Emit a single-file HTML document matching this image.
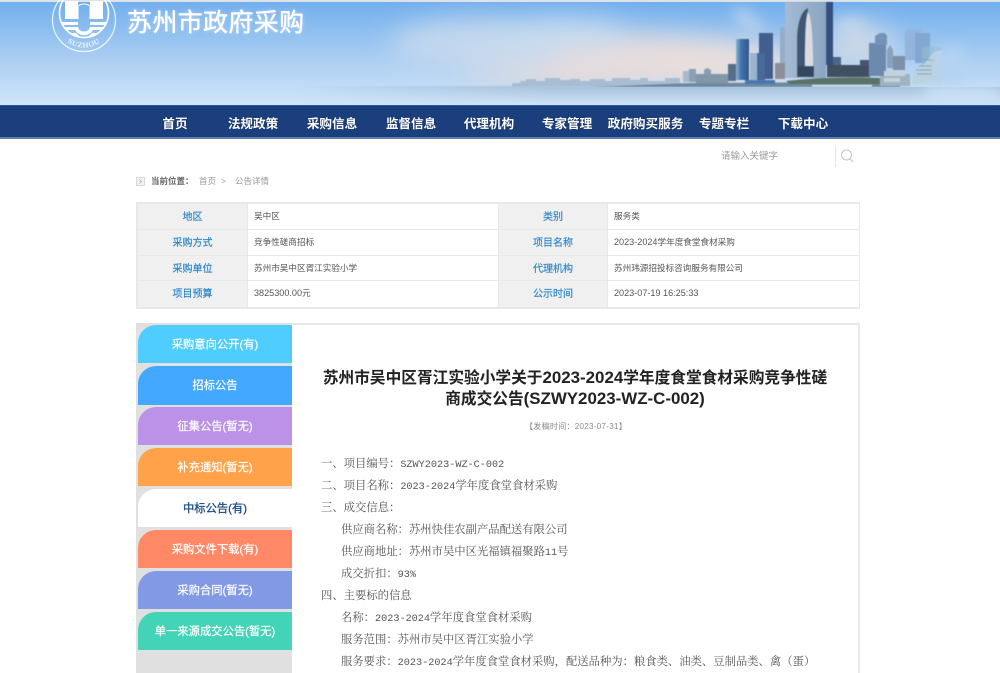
<!DOCTYPE html>
<html lang="zh-CN"><head><meta charset="utf-8"><title>苏州市政府采购</title>
<style>
html,body{margin:0;padding:0;background:#fff;overflow:hidden;width:1000px;height:673px}
#w{position:absolute;left:0;top:0;width:1000px;height:673px;overflow:hidden;font-family:"Liberation Sans","WenQuanYi Zen Hei","Noto Sans CJK SC",sans-serif}
.a{position:absolute;white-space:nowrap}
.nav{top:107px;height:32px;line-height:35px;font-size:12.6px;font-weight:bold;color:#fff;text-shadow:0 0 1px #0b1f4d;transform:translateX(-50%)}
.l{color:#2f88c9;font-size:10px;text-align:center;line-height:27px;font-weight:normal;-webkit-text-stroke:.2px #2f88c9;background:#f0f0f0}
.v{color:#555;font-size:8.6px;line-height:25px;background:#fff;padding-left:6px;box-sizing:border-box}
.v b{font-weight:normal;font-size:9.1px}
.tab{left:138px;width:154px;height:38px;line-height:40px;border-radius:18px 0 0 0;color:#fff;text-align:center;font-size:11.3px;-webkit-text-stroke:.2px #fff}
.c{color:#555;font-size:11.33px;font-family:"Liberation Mono","Noto Serif CJK SC",serif;line-height:22px;letter-spacing:0}
.c b{font-weight:normal;font-size:10.2px}
.t b{font-size:16.9px}
</style></head><body><div id="w">

<svg class="a" style="left:0;top:0" width="1000" height="105" viewBox="0 0 1000 105">
<defs>
<linearGradient id="sky" x1="0" y1="0" x2="0" y2="1"><stop offset="0" stop-color="#70aeed"/><stop offset=".55" stop-color="#a9cdf2"/><stop offset="1" stop-color="#d0e5fa"/></linearGradient>
<linearGradient id="wat" x1="0" y1="0" x2="0" y2="1"><stop offset="0" stop-color="#a7c3dd"/><stop offset="1" stop-color="#d0e4f8"/></linearGradient>
<linearGradient id="far" x1="300" y1="0" x2="520" y2="0" gradientUnits="userSpaceOnUse"><stop offset="0" stop-color="#a7bdd3" stop-opacity="0"/><stop offset="1" stop-color="#a7bdd3"/></linearGradient>
<linearGradient id="mg" x1="300" y1="0" x2="540" y2="0" gradientUnits="userSpaceOnUse"><stop offset="0" stop-color="#000"/><stop offset="1" stop-color="#fff"/></linearGradient>
<mask id="wm" maskUnits="userSpaceOnUse" x="0" y="80" width="1000" height="30"><rect x="0" y="80" width="1000" height="30" fill="url(#mg)"/></mask>
<filter id="b20" x="-50%" y="-50%" width="200%" height="200%"><feGaussianBlur stdDeviation="13"/></filter>
<filter id="b8" x="-50%" y="-50%" width="200%" height="200%"><feGaussianBlur stdDeviation="7"/></filter>
<filter id="b1"><feGaussianBlur stdDeviation=".45"/></filter>
<linearGradient id="gt" x1="0" y1="0" x2="1" y2="0"><stop offset="0" stop-color="#a4bbd3"/><stop offset="1" stop-color="#8aa5c2"/></linearGradient>
<linearGradient id="bl" x1="0" y1="0" x2="1" y2="0"><stop offset="0" stop-color="#8fb0d0"/><stop offset=".4" stop-color="#3f72ad"/><stop offset="1" stop-color="#33588a"/></linearGradient>
</defs>
<rect width="1000" height="105" fill="url(#sky)"/>
<rect width="1000" height="2" fill="#dfe3e8"/>
<g filter="url(#b20)">
<ellipse cx="620" cy="62" rx="170" ry="28" fill="#e6dcdc"/>
<ellipse cx="730" cy="65" rx="70" ry="22" fill="#eadfdc"/>
<ellipse cx="480" cy="45" rx="90" ry="25" fill="#c4d8ee"/>
<ellipse cx="560" cy="35" rx="70" ry="16" fill="#c9dbee"/>
<ellipse cx="860" cy="45" rx="35" ry="20" fill="#cfd9e6"/>
</g>
<g filter="url(#b8)" fill="#dde3ec" opacity=".7">
<ellipse cx="742" cy="14" rx="10" ry="5"/><ellipse cx="752" cy="25" rx="12" ry="5"/><ellipse cx="850" cy="25" rx="16" ry="6"/>
</g>
<g filter="url(#b1)">
<!-- far shore -->
<path d="M300 86H512V83H520V81H526V79H536V81H545V78H560V80H570V79H580V81H590V79H605V81H612V78H630V80H640V78H648V81H665V78H680V87H300Z" fill="url(#far)"/>
<path d="M590 87L640 85L690 83L900 82V87H590Z" fill="#6d8aa0"/>
<!-- left low buildings -->
<rect x="683" y="71" width="6" height="11" fill="#a9b9c9"/><rect x="689" y="69" width="7" height="13" fill="#8ca0b5"/>
<path d="M704 82V70L707 68L711 70V82Z" fill="#8a9eb3"/>
<rect x="696" y="74" width="32" height="9" fill="#8297aa"/>
<rect x="728" y="64" width="8" height="17" fill="#566e89"/>
<rect x="736" y="39" width="13" height="41" fill="url(#bl)"/>
<rect x="759" y="33" width="14" height="46" fill="#3f5e8e"/>
<rect x="750" y="53" width="13" height="27" fill="#9ab4d0"/><rect x="757" y="53" width="8" height="27" fill="#49699a"/>
<rect x="780" y="27" width="5" height="40" fill="#94aec9"/>
<rect x="775" y="63" width="10" height="16" fill="#8a8f98"/>
<rect x="745" y="80" width="30" height="4" fill="#4a78b0"/>
<!-- gate of orient -->
<rect x="785" y="2" width="41" height="76" fill="url(#gt)"/>
<path d="M805 66C805 30 806 16 808 12C811 16 813 35 813 66Z" fill="#dcdbe2"/>
<path d="M797 66V40C797 22 802 10 808 8V12C806 16 805 30 805 66Z" fill="#3f5675"/>
<rect x="826" y="2" width="7" height="63" fill="#34507f"/>
<rect x="797" y="66" width="17" height="11" fill="#344660"/>
<rect x="833" y="57" width="8" height="10" fill="#4d6887"/>
<rect x="827" y="65" width="43" height="12" fill="#3f4f62"/>
<rect x="860" y="60" width="9" height="6" fill="#42566f"/>
<!-- right towers -->
<rect x="869" y="43" width="17" height="33" fill="#6c8aae"/>
<path d="M875 45V36L880 33H885L887 36V45Z" fill="#7393b8"/>
<path d="M887 68V50L890 45L893 50V68Z" fill="#8ba0b9"/>
<rect x="893" y="56" width="12" height="14" fill="#7c90a8"/>
<path d="M905 68V31L910 29H921V33H930V60H905Z" fill="#93b4db"/><rect x="915" y="33" width="15" height="30" fill="#83a7d3"/>
<rect x="922" y="47" width="20" height="22" fill="#8fbcd0" opacity=".7"/>
<path d="M786 81Q830 76 880 78L885 84H790Z" fill="#5a7365"/>
<path d="M880 76L910 74V86H880Z" fill="#9fb3c0"/>
<path d="M884 71H905V76H884ZM884 78H900V82H884Z" fill="#c4d2dd"/>
<path d="M912 84L914 72L924 64L934 52L942 50V86Z" fill="#bcd2e0"/>
<path d="M916 70H932M917 74H932M919 66H932M922 60H934" stroke="#7fa0b8" stroke-width="1"/>
<rect x="812" y="85" width="60" height="1.5" fill="#dde5ee"/>
</g>
<rect x="0" y="87" width="1000" height="18" fill="url(#wat)" mask="url(#wm)"/>
<rect x="938" y="48" width="26" height="42" fill="#b4d3f3" filter="url(#b8)"/>
<rect x="925" y="88" width="75" height="17" fill="#cbe1f8" filter="url(#b8)"/>
<!-- logo -->
<g fill="none" stroke="#fff">
<circle cx="84" cy="20" r="31.5" stroke-width="1.2" opacity=".85"/>
<circle cx="84" cy="13" r="24.5" stroke-width="1.6"/>
</g>
<path d="M65 1H78V19H65ZM90 1H103V19H90Z" fill="#fff"/>
<path d="M62 22H78V25H63ZM90 22H106L105 25H90ZM65 27H78C79 33 89 33 90 27H103L101 30H93C89 37 79 37 75 30H67ZM71 33H76L79 36H74ZM92 33H97L94 36H89Z" fill="#fff"/>
<path d="M78 19V6Q84 2 90 6V19" fill="none" stroke="#fff" stroke-width="1"/>
<path id="arc" d="M58 30A28 28 0 0 0 110 30" fill="none"/>
<text font-family="Liberation Serif,serif" font-size="7.5" font-weight="bold" fill="#eef6fd" letter-spacing=".6" text-anchor="middle"><textPath href="#arc" startOffset="50%">SUZHOU</textPath></text>
</svg>

<div class="a" style="left:127px;top:6px;font-size:25px;line-height:34px;letter-spacing:.35px;color:#fff;font-weight:normal;-webkit-text-stroke:.4px #fff;text-shadow:0 0 4px rgba(255,255,255,.5)">苏州市政府采购</div>

<div class="a" style="left:0;top:105px;width:1000px;height:34px;background:#1b3f7c;border-top:1px solid #2c5aa0;box-sizing:border-box"></div>
<div class="a" style="left:0;top:137px;width:1000px;height:2px;background:#5a7fb0"></div>
<div class="a nav" style="left:175px">首页</div>
<div class="a nav" style="left:253px">法规政策</div>
<div class="a nav" style="left:332px">采购信息</div>
<div class="a nav" style="left:411px">监督信息</div>
<div class="a nav" style="left:489px">代理机构</div>
<div class="a nav" style="left:567px">专家管理</div>
<div class="a nav" style="left:645.5px">政府购买服务</div>
<div class="a nav" style="left:724px">专题专栏</div>
<div class="a nav" style="left:803px">下载中心</div>

<div class="a" style="left:721px;top:150px;font-size:9.5px;line-height:13px;color:#999">请输入关键字</div>
<div class="a" style="left:835px;top:146px;width:1px;height:21px;background:#e3e3e3"></div>
<svg class="a" style="left:839px;top:148px" width="16" height="16" viewBox="0 0 16 16"><circle cx="7.5" cy="7" r="5" fill="none" stroke="#c4c4c4" stroke-width="1"/><path d="M11 10.5L14 14" stroke="#c4c4c4" stroke-width="1"/></svg>

<svg class="a" style="left:136px;top:177px" width="9" height="9" viewBox="0 0 9 9"><rect x=".5" y=".5" width="8" height="8" fill="#f2f2f2" stroke="#d8d8d8"/><path d="M3.5 2.5L5.5 4.5L3.5 6.5" fill="none" stroke="#aaa" stroke-width=".8"/></svg>
<div class="a" style="left:151px;top:175px;font-size:8.5px;line-height:12px;font-weight:bold;color:#666">当前位置：</div>
<div class="a" style="left:199px;top:175px;font-size:8.5px;line-height:12px;color:#999">首页</div>
<div class="a" style="left:221px;top:175px;font-size:8.5px;line-height:12px;color:#999">&gt;</div>
<div class="a" style="left:235px;top:175px;font-size:8.5px;line-height:12px;color:#999">公告详情</div>

<!-- info table -->
<div class="a" style="left:136px;top:202px;width:724px;height:107px;background:#e8e8e8"></div>
<div class="a l" style="left:138px;top:204px;width:109px;height:25px">地区</div>
<div class="a v" style="left:248px;top:204px;width:250px;height:25px">吴中区</div>
<div class="a l" style="left:499px;top:204px;width:108px;height:25px">类别</div>
<div class="a v" style="left:608px;top:204px;width:251px;height:25px">服务类</div>
<div class="a l" style="left:138px;top:230px;width:109px;height:25px">采购方式</div>
<div class="a v" style="left:248px;top:230px;width:250px;height:25px">竞争性磋商招标</div>
<div class="a l" style="left:499px;top:230px;width:108px;height:25px">项目名称</div>
<div class="a v" style="left:608px;top:230px;width:251px;height:25px"><b>2023-2024</b>学年度食堂食材采购</div>
<div class="a l" style="left:138px;top:256px;width:109px;height:24px">采购单位</div>
<div class="a v" style="left:248px;top:256px;width:250px;height:24px">苏州市吴中区胥江实验小学</div>
<div class="a l" style="left:499px;top:256px;width:108px;height:24px">代理机构</div>
<div class="a v" style="left:608px;top:256px;width:251px;height:24px">苏州玮源招投标咨询服务有限公司</div>
<div class="a l" style="left:138px;top:281px;width:109px;height:26px">项目预算</div>
<div class="a v" style="left:248px;top:281px;width:250px;height:26px"><b>3825300.00</b>元</div>
<div class="a l" style="left:499px;top:281px;width:108px;height:26px">公示时间</div>
<div class="a v" style="left:608px;top:281px;width:251px;height:26px"><b>2023-07-19 16:25:33</b></div>

<!-- main box -->
<div class="a" style="left:136px;top:323px;width:724px;height:360px;border:2px solid #e8e8e8;box-sizing:border-box;background:#fff"></div>
<div class="a" style="left:136px;top:323px;width:156px;height:350px;background:#e0e0e0"></div>
<div class="a tab" style="top:325px;background:#4fcdff">采购意向公开(有)</div>
<div class="a tab" style="top:366px;background:#43a8ff;height:39px">招标公告</div>
<div class="a tab" style="top:407px;background:#bb92e8">征集公告(暂无)</div>
<div class="a tab" style="top:448px;background:#ffa24a">补充通知(暂无)</div>
<div class="a tab" style="top:489px;background:#fff;color:#1c4a86;-webkit-text-stroke:.3px #1c4a86">中标公告(有)</div>
<div class="a tab" style="top:530px;background:#ff8866">采购文件下载(有)</div>
<div class="a tab" style="top:571px;background:#829ae6">采购合同(暂无)</div>
<div class="a tab" style="top:612px;background:#43d3b7">单一来源成交公告(暂无)</div>

<div class="a t" style="left:300px;width:550px;top:368px;text-align:center;font-size:15.7px;line-height:19.5px;font-weight:bold;color:#222">苏州市吴中区胥江实验小学关于<b>2023-2024</b>学年度食堂食材采购竞争性磋<br>商成交公告<b>(SZWY2023-WZ-C-002)</b></div>
<div class="a" style="left:525px;top:421px;font-size:8px;line-height:11px;letter-spacing:.3px;color:#888">【发稿时间：2023-07-31】</div>

<div class="a c" style="left:321px;top:454px">一、项目编号：<b>SZWY2023-WZ-C-002</b></div>
<div class="a c" style="left:321px;top:476px">二、项目名称：<b>2023-2024</b>学年度食堂食材采购</div>
<div class="a c" style="left:321px;top:498px">三、成交信息：</div>
<div class="a c" style="left:341px;top:520px">供应商名称：苏州快佳农副产品配送有限公司</div>
<div class="a c" style="left:341px;top:542px">供应商地址：苏州市吴中区光福镇福聚路<b>11</b>号</div>
<div class="a c" style="left:341px;top:564px">成交折扣：<b>93%</b></div>
<div class="a c" style="left:321px;top:586px">四、主要标的信息</div>
<div class="a c" style="left:341px;top:608px">名称：<b>2023-2024</b>学年度食堂食材采购</div>
<div class="a c" style="left:341px;top:630px">服务范围：苏州市吴中区胥江实验小学</div>
<div class="a c" style="left:341px;top:652px">服务要求：<b>2023-2024</b>学年度食堂食材采购，配送品种为：粮食类、油类、豆制品类、禽（蛋）</div>
</div></body></html>
